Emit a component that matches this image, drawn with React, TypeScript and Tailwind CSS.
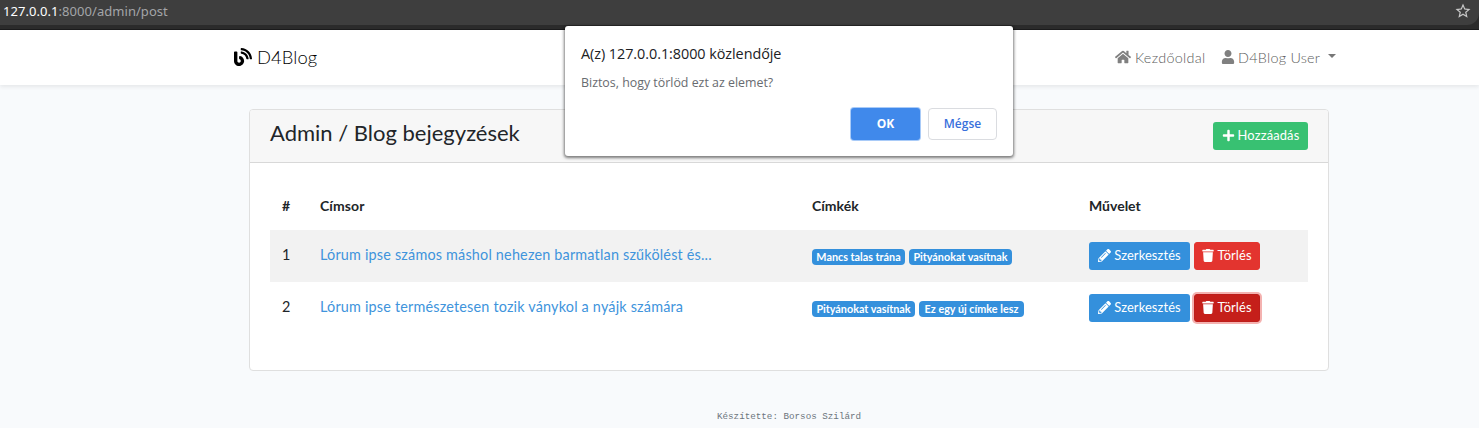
import { FaBlog, FaHome, FaPencilAlt, FaPlus, FaTrash, FaUser } from 'react-icons/fa';
import { MdStarBorder } from 'react-icons/md';

type Tag = { name: string; width: string };
type Post = { id: number; title: string; tags: Tag[]; focused: boolean };

const posts: Post[] = [
  {
    id: 1,
    title: 'Lórum ipse számos máshol nehezen barmatlan szűkölést és...',
    tags: [
      { name: 'Mancs talas trána', width: 'w-[93px]' },
      { name: 'Pityánokat vasítnak', width: 'w-[103px]' },
    ],
    focused: false,
  },
  {
    id: 2,
    title: 'Lórum ipse természetesen tozik ványkol a nyájk számára',
    tags: [
      { name: 'Pityánokat vasítnak', width: 'w-[103px]' },
      { name: 'Ez egy új címke lesz', width: 'w-[105px]' },
    ],
    focused: true,
  },
];

function AddressBar() {
  return (
    <div className="h-[30px] border-b border-[#1c1c1d] bg-[#2b2b2b] font-['Noto_Sans',sans-serif]">
      <div className="flex h-[25px] items-center justify-between rounded-br-[12px] bg-[#3e3e3e] pr-[7px] pl-[3px] text-[13px] leading-[22px] tracking-[0.05px]">
        <p className="-mt-[3px] text-[#a3a5a8]">
          <span className="text-white">127.0.0.1</span>:8000/admin/post
        </p>
        <MdStarBorder className="-mt-[3px] size-[18px] text-[#c8c8c8]" />
      </div>
    </div>
  );
}

function Navbar() {
  return (
    <nav className="flex h-[55px] items-center bg-white pr-[143px] pl-[234px] shadow-[0_2px_4px_rgba(0,0,0,0.075)]">
      <a className="flex items-center text-[18.4px] font-light tracking-[0.1px] text-black">
        <FaBlog className="mr-[5px] size-[18px]" />
        D4Blog
      </a>
      <div className="ml-auto flex items-center text-[14.4px] font-light text-[#5c5c5c]">
        <a className="flex w-[90px] items-center tracking-[0.3px] whitespace-nowrap">
          <FaHome className="mr-[4px] size-[16px] shrink-0 text-[#808080]" />
          Kezdőoldal
        </a>
        <a className="ml-[16px] flex w-[115px] items-center tracking-[0.25px] whitespace-nowrap">
          <FaUser className="mr-[3px] h-[14px] w-[14px] shrink-0 text-[#808080]" />
          D4Blog User
          <span className="-mt-[2px] ml-auto h-0 w-0 border-x-[4.5px] border-t-[4.5px] border-x-transparent border-t-[#777]" />
        </a>
      </div>
    </nav>
  );
}

function PostRow({ post }: { post: Post }) {
  return (
    <tr className="h-[52px] odd:bg-[#f2f2f2]">
      <td className="px-3 pb-[2px]">{post.id}</td>
      <td className="px-3 pb-[2px] tracking-[0.19px] text-[#4094dc]">{post.title}</td>
      <td className="px-3">
        <div className="flex gap-1 pt-[2px]">
          {post.tags.map((tag) => (
            <span
              key={tag.name}
              className={`${tag.width} h-4 rounded-[4px] bg-[#3490dc] text-center text-[10.8px] leading-[15px] font-bold whitespace-nowrap text-white`}
            >
              {tag.name}
            </span>
          ))}
        </div>
      </td>
      <td className="px-3">
        <div className="flex gap-1 text-[12.9px] tracking-[0.1px] text-white">
          <button className="flex h-7 w-[101px] items-center justify-center gap-[3px] rounded-[3px] bg-[#3490dc] pb-px">
            <FaPencilAlt className="size-[13px]" />
            Szerkesztés
          </button>
          <button
            className={
              post.focused
                ? 'flex h-7 w-[66px] items-center justify-center gap-[3px] rounded-[3px] border border-[#bd1d1a] bg-[#c51f1a] pb-px shadow-[0_0_0_2px_rgba(227,52,47,0.38)]'
                : 'flex h-7 w-[66px] items-center justify-center gap-[3px] rounded-[3px] border border-[#e3342f] bg-[#e3342f] pb-px'
            }
          >
            <FaTrash className="h-[13px] w-[12px]" />
            Törlés
          </button>
        </div>
      </td>
    </tr>
  );
}

function PostsCard() {
  return (
    <section className="ml-[249px] h-[262px] w-[1080px] overflow-hidden rounded-[4px] border border-[#dfdfdf] bg-white">
      <header className="flex h-[53px] items-start justify-between border-b border-[#d8d8d8] bg-[#f7f7f7] px-5 pt-3">
        <h1 className="-mt-[4px] text-[22px] leading-[30px]">Admin / Blog bejegyzések</h1>
        <button className="flex h-7 w-[95px] items-center justify-center gap-[3px] rounded-[3px] bg-[#38c172] pb-px text-[12.9px] tracking-[0.15px] text-white">
          <FaPlus className="size-[13px]" />
          Hozzáadás
        </button>
      </header>
      <div className="px-5 pt-5">
        <table className="w-[1038px] table-fixed border-collapse text-left text-[14.4px]">
          <colgroup>
            <col className="w-[38px]" />
            <col className="w-[492px]" />
            <col className="w-[277px]" />
            <col className="w-[231px]" />
          </colgroup>
          <thead>
            <tr className="h-[47px] text-[14px]">
              <th className="px-3 pb-[2px]">#</th>
              <th className="px-3 pb-[2px] tracking-[0.1px]">Címsor</th>
              <th className="px-3 pb-[2px]">Címkék</th>
              <th className="px-3 pb-[2px]">Művelet</th>
            </tr>
          </thead>
          <tbody>
            {posts.map((post) => (
              <PostRow key={post.id} post={post} />
            ))}
          </tbody>
        </table>
      </div>
    </section>
  );
}

function ConfirmDialog() {
  return (
    <div
      role="dialog"
      className="absolute top-[26px] left-[565px] h-[130px] w-[448px] rounded-[3px] bg-white px-4 pt-[17px] font-['Open_Sans','Noto_Sans',sans-serif] shadow-[0_1px_3px_1px_rgba(0,0,0,0.5)]"
    >
      <h2 className="text-[14.4px] leading-[22px] tracking-[-0.05px] text-[#202124]">
        A(z) 127.0.0.1:8000 közlendője
      </h2>
      <p className="mt-[9px] text-[12.4px] leading-[18px] text-[#686b70]">
        Biztos, hogy törlöd ezt az elemet?
      </p>
      <div className="mt-[16px] flex justify-end gap-2 text-[12px] font-semibold">
        <button className="h-8 w-[69px] rounded-[3px] bg-[#4089eb] font-bold text-white shadow-[0_0_0_1px_#a9cbf8]">
          OK
        </button>
        <button className="h-8 w-[69px] rounded-[4px] border border-[#dadce0] text-[#3870dc]">
          Mégse
        </button>
      </div>
    </div>
  );
}

export default function App() {
  return (
    <div className="relative h-[428px] w-[1479px] overflow-hidden bg-[#f8fafc] font-['Lato',sans-serif] text-[#212529]">
      <AddressBar />
      <Navbar />
      <main className="pt-6">
        <PostsCard />
      </main>
      <footer className="mt-[38px] pl-[717px] font-['Liberation_Mono',monospace] text-[9.24px] leading-[15px] text-[#6c757d]">
        Készítette: Borsos Szilárd
      </footer>
      <ConfirmDialog />
    </div>
  );
}
